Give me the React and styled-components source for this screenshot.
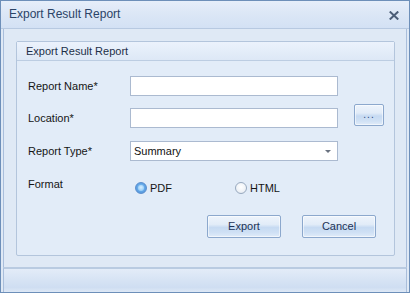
import React, { useState } from "react";
import styled, { createGlobalStyle } from "styled-components";

const GlobalStyle = createGlobalStyle`
  html, body {
    margin: 0;
    padding: 0;
    background: #dfe9f5;
  }
  * {
    box-sizing: border-box;
  }
`;

const Window = styled.div`
  width: 410px;
  height: 293px;
  display: flex;
  flex-direction: column;
  border: 1px solid #6d8fb9;
  background: #dfe9f5;
  font-family: "Liberation Sans", Arial, sans-serif;
  font-size: 11px;
  color: #151515;
`;

const TitleBar = styled.div`
  height: 28px;
  flex: none;
  display: flex;
  align-items: center;
  justify-content: space-between;
  padding: 0 10px 0 8px;
  background: linear-gradient(to bottom, #e6eefa 0%, #dce7f6 45%, #d3e1f4 100%);
  border-bottom: 1px solid #b7c9e1;
`;

const TitleText = styled.span`
  font-size: 12px;
  color: #2b4467;
  padding-bottom: 1px;
`;

const CloseBtn = styled.div`
  width: 11px;
  height: 11px;
  display: flex;
  align-items: center;
  justify-content: center;
  margin-top: 1px;
`;

const Body = styled.div`
  flex: 1;
  margin: 0 2px;
  padding: 12px 11px 11px 12px;
  border-left: 1px solid #a9bedb;
  border-right: 1px solid #a9bedb;
  background: #dfe9f5;
  display: flex;
`;

const GroupBox = styled.div`
  flex: 1;
  display: flex;
  flex-direction: column;
  border: 1px solid #b3c5dc;
  border-radius: 2px;
  background: #e2ecf8;
`;

const GroupHeader = styled.div`
  height: 19px;
  flex: none;
  display: flex;
  align-items: center;
  padding-left: 9px;
  font-size: 11px;
  color: #1d2f48;
  background: linear-gradient(to bottom, #ebf2fc, #dde8f6);
  border-bottom: 1px solid #bccde2;
`;

const FormArea = styled.div`
  padding: 15px 0 0 11px;
  display: flex;
  flex-direction: column;
`;

const Row = styled.div`
  display: flex;
  align-items: center;
  height: ${(p) => p.$height || 20}px;
  margin-bottom: ${(p) => p.$gap || 0}px;
`;

const Label = styled.div`
  width: 102px;
  flex: none;
  align-self: ${(p) => (p.$top ? "flex-start" : "center")};
  margin-top: ${(p) => p.$top || 0}px;
`;

const TextBox = styled.div`
  width: 208px;
  height: 20px;
  flex: none;
  background: #ffffff;
  border: 1px solid #abbad0;
`;

const SelectBox = styled(TextBox)`
  display: flex;
  align-items: center;
  justify-content: space-between;
  padding: 0 6px 0 3px;
  color: #111;
`;

const Arrow = styled.span`
  width: 0;
  height: 0;
  border-left: 3px solid transparent;
  border-right: 3px solid transparent;
  border-top: 3px solid #6a7280;
  margin-top: 1px;
`;

const Button = styled.button`
  width: 74px;
  height: 23px;
  flex: none;
  padding: 0 0 1px 0;
  font-family: "Liberation Sans", Arial, sans-serif;
  font-size: 11px;
  color: #1d3356;
  border: 1px solid #8ca8cd;
  border-radius: 2px;
  background: linear-gradient(
    to bottom,
    #eef4fc 0%,
    #e2ecf8 40%,
    #c6daf2 55%,
    #d0e1f5 80%,
    #e1ecf9 100%
  );
  box-shadow: inset 0 0 0 1px rgba(255, 255, 255, 0.55);
  cursor: default;
`;

const BrowseButton = styled(Button)`
  width: 30px;
  height: 22px;
  margin-left: 16px;
  margin-top: -6px;
`;

const Dots = styled.span`
  font-size: 10px;
  letter-spacing: 1px;
  color: #2a4a78;
  position: relative;
  top: -1px;
`;

const RadioGroup = styled.div`
  display: flex;
  align-items: center;
  padding-left: 5px;
  align-self: flex-end;
  margin-bottom: 3px;
`;

const RadioOption = styled.label`
  width: 100px;
  display: flex;
  align-items: center;
  gap: 3px;
  cursor: default;
`;

const RadioCircle = styled.span`
  width: 12px;
  height: 12px;
  border-radius: 50%;
  display: flex;
  align-items: center;
  justify-content: center;
  border: 1px solid ${(p) => (p.$on ? "#5b8fcf" : "#98a9bf")};
  background: ${(p) =>
    p.$on
      ? "radial-gradient(circle at 50% 45%, #9fd0f7 0%, #5fa4e6 55%, #4e8ad0 100%)"
      : "radial-gradient(circle at 50% 40%, #ffffff 0%, #eef2f7 60%, #d9e0ea 100%)"};
`;

const RadioDot = styled.span`
  width: 6px;
  height: 6px;
  border-radius: 50%;
  background: radial-gradient(circle at 50% 40%, #d8efff, #7fc0f4);
`;

const ButtonRow = styled.div`
  display: flex;
  justify-content: flex-end;
  gap: 21px;
  padding-right: 18px;
  margin-top: 18px;
`;

const Footer = styled.div`
  height: 25px;
  flex: none;
  margin: 0 2px;
  border-left: 1px solid #a9bedb;
  border-right: 1px solid #a9bedb;
  border-top: 2px solid #b9cbe1;
  background: linear-gradient(to bottom, #e3ecf8 0%, #d6e3f4 50%, #cfdef2 80%, #dde8f6 100%);
`;

export default function App() {
  const [format, setFormat] = useState("PDF");

  return (
    <>
      <GlobalStyle />
      <Window>
        <TitleBar>
          <TitleText>Export Result Report</TitleText>
          <CloseBtn>
            <svg width="10" height="9" viewBox="0 0 10 9">
              <path d="M1.5 1.2 L8.5 7.8 M8.5 1.2 L1.5 7.8" stroke="#4b5d77" strokeWidth="2" strokeLinecap="square" />
            </svg>
          </CloseBtn>
        </TitleBar>
        <Body>
          <GroupBox>
            <GroupHeader>Export Result Report</GroupHeader>
            <FormArea>
              <Row $gap={12}>
                <Label>Report Name*</Label>
                <TextBox />
              </Row>
              <Row $gap={13}>
                <Label>Location*</Label>
                <TextBox />
                <BrowseButton>
                  <Dots>...</Dots>
                </BrowseButton>
              </Row>
              <Row $gap={16}>
                <Label>Report Type*</Label>
                <SelectBox>
                  Summary
                  <Arrow />
                </SelectBox>
              </Row>
              <Row $height={20}>
                <Label $top={1}>Format</Label>
                <RadioGroup>
                  {["PDF", "HTML"].map((f) => (
                    <RadioOption key={f} onClick={() => setFormat(f)}>
                      <RadioCircle $on={format === f}>{format === f && <RadioDot />}</RadioCircle>
                      {f}
                    </RadioOption>
                  ))}
                </RadioGroup>
              </Row>
              <ButtonRow>
                <Button>Export</Button>
                <Button>Cancel</Button>
              </ButtonRow>
            </FormArea>
          </GroupBox>
        </Body>
        <Footer />
      </Window>
    </>
  );
}
